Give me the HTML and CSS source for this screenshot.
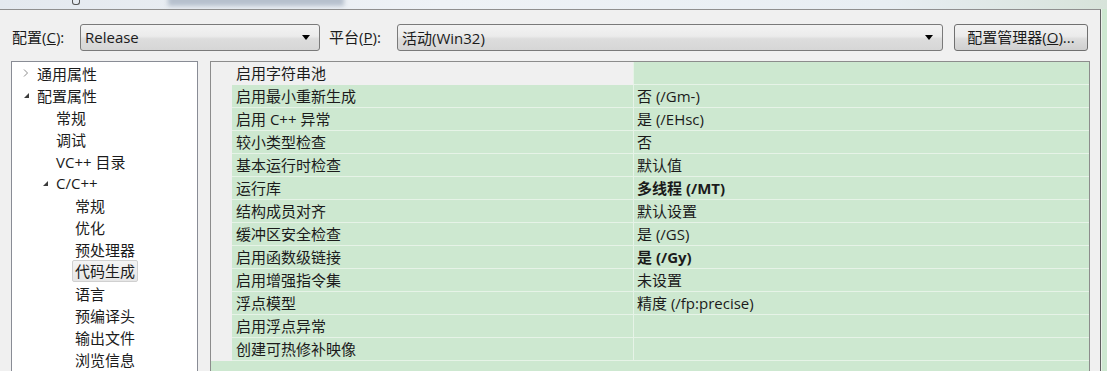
FILE: index.html
```html
<!DOCTYPE html>
<html lang="zh-CN">
<head>
    <meta charset="UTF-8">
    <title>属性页</title>
    <link rel="stylesheet" href="styles.css">
</head>
<body>
    <div class="backdrop">
        <span class="blur-a"></span>
        <span class="blur-b"></span>
    </div>
    <div class="stage">
        <div class="dialog">
            <div class="toolbar">
                <span class="label">配置(<u>C</u>):</span>
                <div class="combo combo-config">
                    <span>Release</span>
                    <span class="caret"></span>
                </div>
                <span class="label label-platform">平台(<u>P</u>):</span>
                <div class="combo combo-platform">
                    <span>活动(Win32)</span>
                    <span class="caret"></span>
                </div>
                <button class="btn">配置管理器(<u>O</u>)...</button>
            </div>

            <div class="panels">
                <ul class="tree">
                    <li class="lvl0"><span class="arrow"><svg width="6" height="8" viewBox="0 0 6 8"><path d="M1 0.5 L4.5 4 L1 7.5" fill="none" stroke="#8c8c8c" stroke-width="1"/></svg></span>通用属性</li>
                    <li class="lvl0"><span class="arrow"><svg width="7" height="7" viewBox="0 0 7 7"><path d="M6 1 L6 6 L1 6 Z" fill="#3c3c3c"/></svg></span>配置属性</li>
                    <li class="lvl1"><span class="arrow"></span>常规</li>
                    <li class="lvl1"><span class="arrow"></span>调试</li>
                    <li class="lvl1"><span class="arrow"></span>VC++ 目录</li>
                    <li class="lvl1"><span class="arrow"><svg width="7" height="7" viewBox="0 0 7 7"><path d="M6 1 L6 6 L1 6 Z" fill="#3c3c3c"/></svg></span>C/C++</li>
                    <li class="lvl2"><span class="arrow"></span>常规</li>
                    <li class="lvl2"><span class="arrow"></span>优化</li>
                    <li class="lvl2"><span class="arrow"></span>预处理器</li>
                    <li class="lvl2"><span class="arrow"></span><span class="selected">代码生成</span></li>
                    <li class="lvl2"><span class="arrow"></span>语言</li>
                    <li class="lvl2"><span class="arrow"></span>预编译头</li>
                    <li class="lvl2"><span class="arrow"></span>输出文件</li>
                    <li class="lvl2"><span class="arrow"></span>浏览信息</li>
                </ul>

                <div class="grid">
                    <div class="row first"><div class="gutter"></div><div class="name">启用字符串池</div><div class="value"></div></div>
                    <div class="row"><div class="gutter"></div><div class="name">启用最小重新生成</div><div class="value">否 (/Gm-)</div></div>
                    <div class="row"><div class="gutter"></div><div class="name">启用 C++ 异常</div><div class="value">是 (/EHsc)</div></div>
                    <div class="row"><div class="gutter"></div><div class="name">较小类型检查</div><div class="value">否</div></div>
                    <div class="row"><div class="gutter"></div><div class="name">基本运行时检查</div><div class="value">默认值</div></div>
                    <div class="row"><div class="gutter"></div><div class="name">运行库</div><div class="value bold">多线程 (/MT)</div></div>
                    <div class="row"><div class="gutter"></div><div class="name">结构成员对齐</div><div class="value">默认设置</div></div>
                    <div class="row"><div class="gutter"></div><div class="name">缓冲区安全检查</div><div class="value">是 (/GS)</div></div>
                    <div class="row"><div class="gutter"></div><div class="name">启用函数级链接</div><div class="value bold">是 (/Gy)</div></div>
                    <div class="row"><div class="gutter"></div><div class="name">启用增强指令集</div><div class="value">未设置</div></div>
                    <div class="row"><div class="gutter"></div><div class="name">浮点模型</div><div class="value">精度 (/fp:precise)</div></div>
                    <div class="row"><div class="gutter"></div><div class="name">启用浮点异常</div><div class="value"></div></div>
                    <div class="row"><div class="gutter"></div><div class="name">创建可热修补映像</div><div class="value"></div></div>
                </div>
            </div>
        </div>
        <div class="behind"></div>
    </div>
</body>
</html>
```

FILE: styles.css
```css
body {
    margin: 0;
    width: 1107px;
    height: 371px;
    overflow: hidden;
    font-family: 'Open Sans', 'Noto Sans CJK SC', sans-serif;
    font-size: 15px;
    color: #1b1b1b;
    background: #cde8d0;
}

/* blurred window behind the dialog */
.backdrop {
    height: 9px;
    position: relative;
    overflow: hidden;
    background: linear-gradient(90deg, #e4e9ef 0%, #eef2f6 40%, #e8eef3 80%, #d7e3da 100%);
}

.blur-a {
    position: absolute;
    left: 72px;
    top: 0;
    width: 6px;
    height: 4px;
    border-radius: 0 0 3px 3px;
    border: 1px solid #555;
    border-top: none;
    filter: blur(0.4px);
}

.blur-b {
    position: absolute;
    left: 168px;
    top: -6px;
    width: 176px;
    height: 12px;
    background: #b6c0cd;
    filter: blur(2px);
}

.stage {
    display: flex;
    height: 362px;
}

.dialog {
    width: 1101px;
    background: #f0f0f0;
    border-top: 1px solid #8f8f8f;
    border-right: 1px solid #5f5f5f;
    box-sizing: border-box;
}

.behind {
    flex: 1;
    border-left: 1px solid #e9f1ea;
}

.toolbar {
    display: flex;
    align-items: center;
    height: 27px;
    margin-top: 14px;
    padding-left: 12px;
}

.label {
    width: 68px;
    white-space: nowrap;
    line-height: 25px;
}

.label-platform {
    margin-left: 9px;
}

.combo {
    height: 27px;
    box-sizing: border-box;
    border: 1px solid #7a7a7a;
    border-radius: 3px;
    background: linear-gradient(#f3f3f3 0%, #ebebeb 45%, #dddddd 55%, #d6d6d6 100%);
    display: flex;
    align-items: center;
    justify-content: space-between;
    padding: 0 9px 1px 4px;
}

.combo-config {
    width: 240px;
}

.combo-platform {
    width: 546px;
}

.caret {
    width: 0;
    height: 0;
    border-left: 4px solid transparent;
    border-right: 4px solid transparent;
    border-top: 5px solid #000;
    margin-top: 1px;
}

.btn {
    margin-left: 11px;
    width: 134px;
    height: 27px;
    border: 1px solid #707070;
    border-radius: 3px;
    background: linear-gradient(#f2f2f2 0%, #ebebeb 45%, #dddddd 55%, #cfcfcf 100%);
    font-family: inherit;
    font-size: 15px;
    color: #1b1b1b;
    padding: 0 0 2px;
}

.panels {
    display: flex;
    gap: 12px;
    margin-top: 10px;
    padding-left: 11px;
}

.tree {
    list-style: none;
    margin: 0;
    padding: 0;
    width: 187px;
    height: 320px;
    box-sizing: border-box;
    background: #fff;
    border: 1px solid #898c95;
    border-bottom: none;
}

.tree li {
    display: flex;
    align-items: center;
    height: 22px;
    white-space: nowrap;
}

.tree .arrow {
    width: 14px;
    display: flex;
    align-items: center;
}

.tree .lvl0 { padding-left: 11px; }
.tree .lvl1 { padding-left: 30px; }
.tree .lvl2 { padding-left: 49px; }

.selected {
    margin-left: -3px;
    padding: 0 2px;
    line-height: 20px;
    border: 1px solid #d0d0d0;
    border-radius: 2px;
    background: linear-gradient(#f4f4f4, #e6e6e6);
}

.grid {
    width: 880px;
    height: 320px;
    box-sizing: border-box;
    border: 1px solid #8c8c8c;
    border-bottom: none;
    background: #cde8d0;
}

.row {
    display: grid;
    grid-template-columns: 21px 402px 1fr;
    height: 23px;
}

.row .gutter {
    background: #f0f0f0;
}

.row .name,
.row .value {
    padding-top: 1px;
    line-height: 21px;
    border-bottom: 1px solid #e6f3e7;
    white-space: nowrap;
}

.row .name {
    padding-left: 4px;
    border-right: 1px solid #e6f3e7;
}

.row .value {
    padding-left: 3px;
}

.row.first .name {
    background: #f0f0f0;
    border-bottom-color: #f0f0f0;
}

.bold {
    font-weight: 700;
}
```
